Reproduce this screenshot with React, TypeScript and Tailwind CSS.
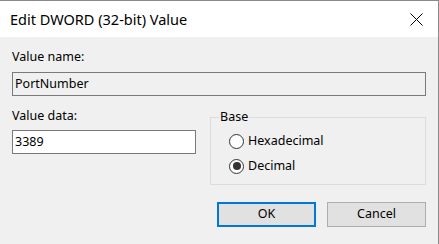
type RadioProps = {
  label: string;
  checked?: boolean;
};

function Radio({ label, checked = false }: RadioProps) {
  return (
    <div className="flex h-[16px] items-center">
      <span className="flex h-[15px] w-[15px] items-center justify-center rounded-full border border-[#333333] bg-white">
        {checked && <span className="h-[8px] w-[8px] rounded-full bg-[#333333]" />}
      </span>
      <span className="ml-[4px] leading-[16px]">{label}</span>
    </div>
  );
}

export default function App() {
  return (
    <div
      className="flex h-[244px] w-[439px] flex-col overflow-hidden border-t border-r border-[#8a8a8a] bg-[#f0f0f0] text-[12.5px] text-black"
      style={{ fontFamily: '"Noto Sans", "Liberation Sans", sans-serif' }}
    >
      {/* title bar */}
      <div className="flex h-[36px] shrink-0 items-center justify-between bg-white pl-[10px] pr-[15px]">
        <span className="text-[14.5px] leading-[20px]">Edit DWORD (32-bit) Value</span>
        <svg width="13" height="13" viewBox="0 0 13 13" className="text-black">
          <path d="M0.5 0.5 L12.5 12.5 M12.5 0.5 L0.5 12.5" stroke="currentColor" strokeWidth="1" />
        </svg>
      </div>

      <div className="flex flex-col px-[12px] pt-[12px]">
        <label className="leading-[16px]">Value name:</label>
        <div className="mt-[7px] flex h-[24px] items-center border border-[#7a7a7a] bg-[#f0f0f0] px-[2px]">
          PortNumber
        </div>

        <div className="mt-[12px] flex items-start justify-between">
          <div className="flex w-[184px] flex-col">
            <label className="leading-[16px]">Value data:</label>
            <div className="mt-[6px] flex h-[24px] items-center border border-[#7a7a7a] bg-white px-[2px]">
              3389
            </div>
          </div>

          <div className="relative mt-[9px] flex h-[68px] w-[216px] flex-col gap-[9px] border border-[#dcdcdc] pt-[15px] pl-[18px]">
            <span className="absolute -top-[9px] left-[8px] bg-[#f0f0f0] px-[1px] leading-[16px]">Base</span>
            <Radio label="Hexadecimal" />
            <Radio label="Decimal" checked />
          </div>
        </div>

        <div className="mt-[17px] flex justify-end gap-[11px]">
          <button
            type="button"
            className="flex h-[25px] w-[99px] items-center justify-center border-2 border-[#0078d7] bg-[#e1e1e1]"
          >
            OK
          </button>
          <button
            type="button"
            className="flex h-[25px] w-[99px] items-center justify-center border border-[#adadad] bg-[#e1e1e1]"
          >
            Cancel
          </button>
        </div>
      </div>
    </div>
  );
}
